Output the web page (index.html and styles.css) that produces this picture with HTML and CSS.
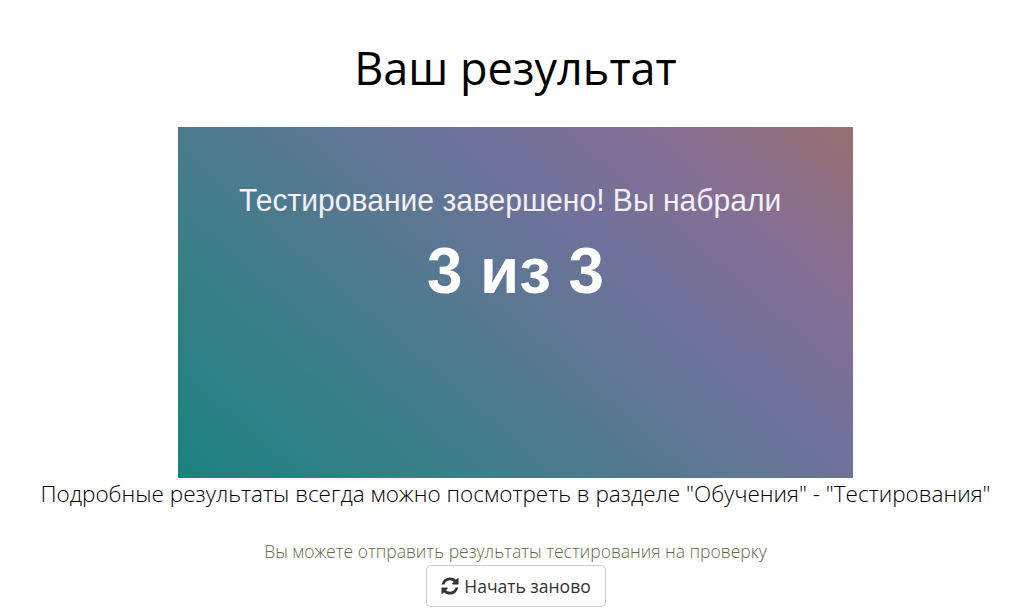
FILE: index.html
```html
<!DOCTYPE html>
<html lang="ru">
  <head>
    <meta charset="UTF-8" />
    <meta name="viewport" content="width=device-width, initial-scale=1.0" />
    <title>Ваш результат</title>

    <link rel="stylesheet" href="styles.css">
  </head>
  <body>
    <div class="result">
      <h1 class="title">Ваш результат</h1>

      <div class="banner">
        <p class="banner-text">Тестирование завершено! Вы набрали</p>
        <p class="banner-score">3 из 3</p>
      </div>

      <p class="details">Подробные результаты всегда можно посмотреть в разделе "Обучения" - "Тестирования"</p>
      <p class="note">Вы можете отправить результаты тестирования на проверку</p>

      <button class="restart" type="button">
        <svg class="restart-icon" viewBox="0 0 1792 1792" aria-hidden="true">
          <path d="M1639 1056q0 5-1 7-64 268-268 434.5t-478 166.5q-146 0-282.5-55t-243.5-157l-129 129q-19 19-45 19t-45-19-19-45v-448q0-26 19-45t45-19h448q26 0 45 19t19 45-19 45l-137 137q71 66 161 102t187 36q134 0 250-65t186-179q11-17 53-117 8-23 30-23h192q13 0 22.5 9.5t9.5 22.5zm25-800v448q0 26-19 45t-45 19h-448q-26 0-45-19t-19-45 19-45l138-138q-148-137-349-137-134 0-250 65t-186 179q-11 17-53 117-8 23-30 23h-199q-13 0-22.5-9.5t-9.5-22.5v-7q65-268 270-434.5t480-166.5q146 0 284 55.5t245 156.5l130-129q19-19 45-19t45 19 19 45z"/>
        </svg>
        Начать заново
      </button>
    </div>
  </body>
</html>
```

FILE: styles.css
```css
* {
  box-sizing: border-box;
}

body {
  margin: 0;
  background: #fff;
  font-family: "Open Sans", sans-serif;
  color: #000;
}

p {
  margin: 0;
}

.result {
  display: flex;
  flex-direction: column;
  align-items: center;
  padding: 36px 0 0 2px;
  text-align: center;
}

.title {
  margin: 0 0 27px;
  font-size: 45px;
  line-height: 64px;
  font-weight: 400;
}

.banner {
  width: 675px;
  height: 351px;
  padding-top: 54px;
  background: linear-gradient(
    41deg,
    #1a817d 0%,
    #3b7f87 26%,
    #5b7793 49%,
    #72719a 66%,
    #876f92 83%,
    #97706f 100%
  );
  color: #fff;
}

.banner-text {
  padding-right: 11px;
  font-family: "Liberation Sans", sans-serif;
  font-size: 31px;
  line-height: 40px;
  color: #f3f1f6;
  transform: scaleX(0.97);
}

.banner-score {
  margin-top: 12px;
  font-family: "Liberation Sans", sans-serif;
  font-size: 65px;
  line-height: 76px;
  font-weight: 700;
  transform: scaleX(0.98);
}

.details {
  margin-top: 1px;
  font-size: 22.5px;
  line-height: 30px;
  font-weight: 300;
  white-space: nowrap;
}

.note {
  margin-top: 30px;
  font-size: 17.5px;
  line-height: 24px;
  font-weight: 300;
  color: #5d6d45;
}

.restart {
  display: flex;
  align-items: center;
  gap: 4px;
  width: 180px;
  height: 42px;
  margin-top: 2px;
  justify-content: center;
  background: #fff;
  border: 1px solid #ccc;
  border-radius: 5px;
  font-family: "Open Sans", sans-serif;
  font-size: 17.5px;
  color: #333;
}

.restart-icon {
  width: 20px;
  height: 20px;
  fill: #333;
}
```
